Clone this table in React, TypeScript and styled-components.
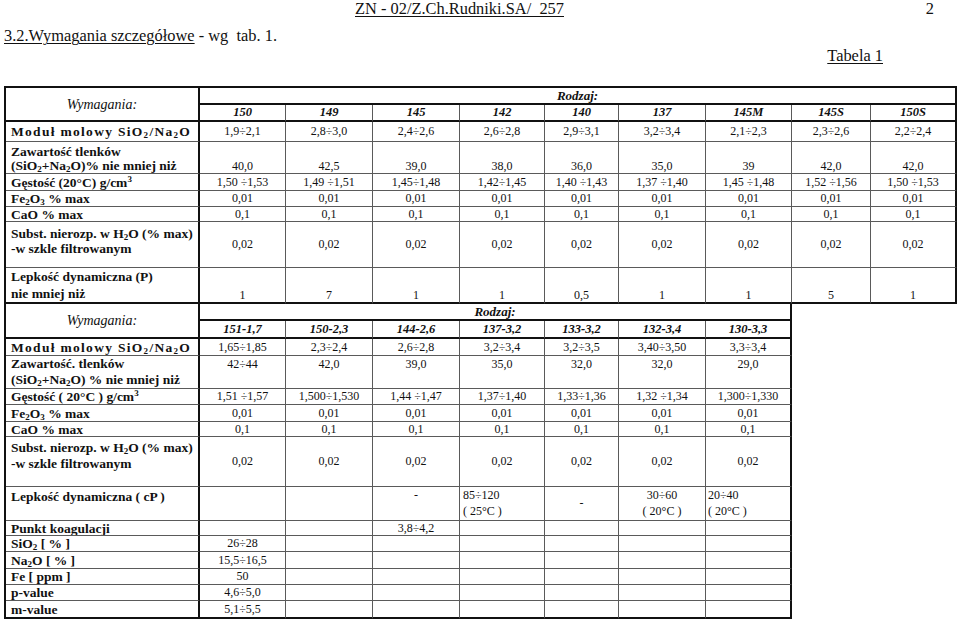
import React from "react";
import styled, { createGlobalStyle } from "styled-components";

const GlobalStyle = createGlobalStyle`
  html, body {
    margin: 0;
    padding: 0;
    background: #fff;
  }
  body {
    font-family: "Liberation Serif", "Times New Roman", serif;
    color: #111;
  }
`;

const Page = styled.div`
  width: 960px;
  height: 621px;
  overflow: hidden;
  padding-left: 4px;
  box-sizing: border-box;
`;

const RunningHeader = styled.div`
  display: flex;
  justify-content: space-between;
  padding: 0 26px 0 351px;
  font-size: 16.4px;
  line-height: 17px;
  white-space: pre;
`;

const Underlined = styled.span`
  text-decoration: underline;
  text-underline-offset: 2px;
  text-decoration-thickness: 1px;
`;

const SectionTitle = styled.div`
  margin-top: 10px;
  font-size: 16.4px;
  line-height: 18px;
  white-space: pre;
`;

const TableCaption = styled.div`
  display: flex;
  justify-content: flex-end;
  padding-right: 77px;
  margin-top: 2px;
  font-size: 16.4px;
  line-height: 18px;
`;

const Table = styled.table<{ $width: number; $noTop?: boolean }>`
  width: ${(p) => p.$width}px;
  border-collapse: separate;
  border-spacing: 0;
  table-layout: fixed;
  border-left: 2px solid #111;
  border-top: ${(p) => (p.$noTop ? "0" : "2px solid #111")};
  font-size: 12px;
  line-height: 13px;
`;

const FirstTable = styled(Table)`
  margin-top: 21px;
`;

const Row = styled.tr<{ $h: number; $thick?: boolean }>`
  height: ${(p) => p.$h}px;
  & > td {
    border-bottom: ${(p) => (p.$thick ? "2px solid #111" : "1px solid #5a5a5a")};
  }
  & > td:last-child {
    border-right: 2px solid #111;
  }
`;

const Cell = styled.td<{ $align?: string; $valign?: string; $pl?: number; $lh?: number }>`
  padding: 0 0 0 ${(p) => p.$pl ?? 0}px;
  border-right: 1px solid #5a5a5a;
  text-align: ${(p) => p.$align ?? "center"};
  vertical-align: ${(p) => p.$valign ?? "middle"};
  line-height: ${(p) => p.$lh ?? 13}px;
  white-space: nowrap;
  overflow: hidden;
`;

const Label = styled.td<{ $valign?: string; $pt?: number; $spread?: number; $lh?: number }>`
  padding: ${(p) => p.$pt ?? 0}px 0 0 5px;
  border-right: 2px solid #111;
  font-size: 13.5px;
  font-weight: bold;
  text-align: left;
  vertical-align: ${(p) => p.$valign ?? "middle"};
  line-height: ${(p) => p.$lh ?? 13}px;
  white-space: nowrap;
  overflow: hidden;
  letter-spacing: ${(p) => p.$spread ?? 0}px;
`;

const CornerHead = styled.td`
  border-right: 2px solid #111;
  font-size: 14px;
  font-style: italic;
  text-align: center;
  vertical-align: middle;
`;

const KindHead = styled.td`
  font-size: 13px;
  font-weight: bold;
  font-style: italic;
  text-align: center;
  vertical-align: middle;
`;

const NumHead = styled(KindHead)`
  font-size: 12.5px;
  border-right: 1px solid #5a5a5a;
`;

const Sub = styled.sub`
  font-size: 9px;
  line-height: 0;
  vertical-align: -2px;
`;

const Sup = styled.sup`
  font-size: 9px;
  line-height: 0;
  vertical-align: 5px;
`;

type Cellish = string | { t: React.ReactNode; align?: string; valign?: string; pl?: number };

type RowDef = {
  label: React.ReactNode;
  h: number;
  values: Cellish[];
  valign?: string;
  labelValign?: string;
  labelPt?: number;
  labelLh?: number;
  spread?: number;
  thick?: boolean;
};

const mod = (
  <>
    Moduł molowy SiO<Sub>2</Sub>/Na<Sub>2</Sub>O
  </>
);

const fe2o3 = (
  <>
    Fe<Sub>2</Sub>O<Sub>3</Sub> % max
  </>
);

const subst = (
  <>
    Subst. nierozp. w H<Sub>2</Sub>O (% max)
    <br />
    -w szkle filtrowanym
  </>
);

const rep = (v: string, n: number) => Array.from({ length: n }, () => v);

const topRows: RowDef[] = [
  {
    label: mod,
    spread: 1.3,
    h: 20,
    values: ["1,9÷2,1", "2,8÷3,0", "2,4÷2,6", "2,6÷2,8", "2,9÷3,1", "3,2÷3,4", "2,1÷2,3", "2,3÷2,6", "2,2÷2,4"],
  },
  {
    label: (
      <>
        Zawartość tlenków
        <br />
        (SiO<Sub>2</Sub>+Na<Sub>2</Sub>O)% nie mniej niż
      </>
    ),
    h: 32,
    valign: "bottom",
    labelValign: "bottom",
    labelLh: 14,
    values: ["40,0", "42,5", "39,0", "38,0", "36,0", "35,0", "39", "42,0", "42,0"],
  },
  {
    label: (
      <>
        Gęstość (20°C) g/cm<Sup>3</Sup>
      </>
    ),
    h: 17,
    values: ["1,50 ÷1,53", "1,49 ÷1,51", "1,45÷1,48", "1,42÷1,45", "1,40 ÷1,43", "1,37 ÷1,40", "1,45 ÷1,48", "1,52 ÷1,56", "1,50 ÷1,53"],
  },
  { label: fe2o3, h: 16, values: rep("0,01", 9) },
  { label: "CaO % max", h: 15, values: rep("0,1", 9) },
  { label: subst, h: 46, labelValign: "top", labelPt: 4, labelLh: 15, values: rep("0,02", 9) },
  {
    label: (
      <>
        Lepkość dynamiczna (P)
        <br />
        nie mniej niż
      </>
    ),
    h: 36,
    thick: true,
    valign: "bottom",
    labelValign: "bottom",
    labelLh: 17,
    values: ["1", "7", "1", "1", "0,5", "1", "1", "5", "1"],
  },
];

const lower: RowDef[] = [
  {
    label: mod,
    spread: 1.3,
    h: 17,
    values: ["1,65÷1,85", "2,3÷2,4", "2,6÷2,8", "3,2÷3,4", "3,2÷3,5", "3,40÷3,50", "3,3÷3,4"],
  },
  {
    label: (
      <>
        Zawartość. tlenków
        <br />
        (SiO<Sub>2</Sub>+Na<Sub>2</Sub>O) % nie mniej niż
      </>
    ),
    h: 33,
    labelValign: "bottom",
    labelLh: 16,
    values: [
      { t: "42÷44", valign: "top" },
      { t: "42,0", valign: "top" },
      { t: "39,0", valign: "top" },
      { t: "35,0", valign: "top" },
      { t: "32,0", valign: "top" },
      { t: "32,0", valign: "top" },
      { t: "29,0", valign: "top" },
    ],
  },
  {
    label: (
      <>
        Gęstość ( 20°C ) g/cm<Sup>3</Sup>
      </>
    ),
    h: 16,
    values: ["1,51 ÷1,57", "1,500÷1,530", "1,44 ÷1,47", "1,37÷1,40", "1,33÷1,36", "1,32 ÷1,34", "1,300÷1,330"],
  },
  { label: fe2o3, h: 17, values: rep("0,01", 7) },
  { label: "CaO % max", h: 15, values: rep("0,1", 7) },
  { label: subst, h: 50, labelValign: "top", labelPt: 3, labelLh: 16, values: rep("0,02", 7) },
  {
    label: "Lepkość dynamiczna ( cP )",
    h: 34,
    labelValign: "top",
    labelPt: 3,
    values: [
      "",
      "",
      { t: "-", valign: "top" },
      {
        t: (
          <>
            85÷120
            <br />( 25°C )
          </>
        ),
        align: "left",
        valign: "top",
        pl: 3,
      },
      "-",
      {
        t: (
          <>
            30÷60
            <br />( 20°C )
          </>
        ),
        valign: "top",
      },
      {
        t: (
          <>
            20÷40
            <br />( 20°C )
          </>
        ),
        align: "left",
        valign: "top",
        pl: 2,
      },
    ],
  },
  { label: "Punkt koagulacji", h: 15, values: ["", "", "3,8÷4,2", "", "", "", ""] },
  {
    label: (
      <>
        SiO<Sub>2</Sub> [ % ]
      </>
    ),
    h: 16,
    values: ["26÷28", "", "", "", "", "", ""],
  },
  {
    label: (
      <>
        Na<Sub>2</Sub>O [ % ]
      </>
    ),
    h: 17,
    values: ["15,5÷16,5", "", "", "", "", "", ""],
  },
  { label: "Fe [ ppm ]", h: 16, values: ["50", "", "", "", "", "", ""] },
  { label: "p-value", h: 16, values: ["4,6÷5,0", "", "", "", "", "", ""] },
  { label: "m-value", h: 18, thick: true, values: ["5,1÷5,5", "", "", "", "", "", ""] },
];

const topCols = [194, 86, 87, 87, 85, 74, 87, 86, 79, 86];
const lowerCols = topCols.slice(0, 8);

const sum = (a: number[]) => a.reduce((s, v) => s + v, 0);

function Body({ rows }: { rows: RowDef[] }) {
  return (
    <>
      {rows.map((r, i) => (
        <Row key={i} $h={r.h} $thick={r.thick}>
          <Label $valign={r.labelValign} $pt={r.labelPt} $spread={r.spread} $lh={r.labelLh}>
            {r.label}
          </Label>
          {r.values.map((v, j) =>
            typeof v === "string" ? (
              <Cell key={j} $valign={r.valign}>
                {v}
              </Cell>
            ) : (
              <Cell key={j} $align={v.align} $valign={v.valign ?? r.valign} $pl={v.pl} $lh={16}>
                {v.t}
              </Cell>
            )
          )}
        </Row>
      ))}
    </>
  );
}

function SpecTable({
  cols,
  kinds,
  rows,
  heads,
  noTop,
  first,
}: {
  cols: number[];
  kinds: string[];
  rows: RowDef[];
  heads: [number, number];
  noTop?: boolean;
  first?: boolean;
}) {
  const T = first ? FirstTable : Table;
  return (
    <T $width={sum(cols) + 2} $noTop={noTop}>
      <colgroup>
        {cols.map((w, i) => (
          <col key={i} style={{ width: w }} />
        ))}
      </colgroup>
      <tbody>
        <Row $h={heads[0]} $thick>
          <CornerHead rowSpan={2}>Wymagania:</CornerHead>
          <KindHead colSpan={kinds.length}>Rodzaj:</KindHead>
        </Row>
        <Row $h={heads[1]} $thick>
          {kinds.map((k) => (
            <NumHead key={k}>{k}</NumHead>
          ))}
        </Row>
        <Body rows={rows} />
      </tbody>
    </T>
  );
}

export default function App() {
  return (
    <Page>
      <GlobalStyle />
      <RunningHeader>
        <Underlined>ZN - 02/Z.Ch.Rudniki.SA/  257</Underlined>
        <span>2</span>
      </RunningHeader>
      <SectionTitle>
        <Underlined>3.2.Wymagania szczegółowe</Underlined> - wg  tab. 1.
      </SectionTitle>
      <TableCaption>
        <Underlined>Tabela 1</Underlined>
      </TableCaption>
      <SpecTable
        first
        cols={topCols}
        heads={[17, 17]}
        kinds={["150", "149", "145", "142", "140", "137", "145M", "145S", "150S"]}
        rows={topRows}
      />
      <SpecTable
        noTop
        cols={lowerCols}
        heads={[17, 18]}
        kinds={["151-1,7", "150-2,3", "144-2,6", "137-3,2", "133-3,2", "132-3,4", "130-3,3"]}
        rows={lower}
      />
    </Page>
  );
}
